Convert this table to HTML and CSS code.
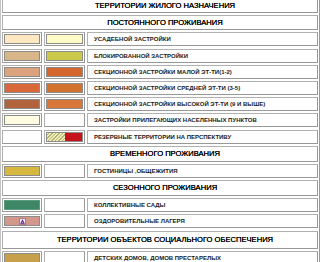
FILE: index.html
```html
<!DOCTYPE html>
<html lang="ru">
<head>
<meta charset="utf-8">
<link rel="stylesheet" href="styles.css">
</head>
<body>
<div class="legend">
  <div class="cell head h1">ТЕРРИТОРИИ ЖИЛОГО НАЗНАЧЕНИЯ</div>
  <div class="cell head h2">ПОСТОЯННОГО ПРОЖИВАНИЯ</div>

  <div class="cell sw"><div class="swatch c-usad1"></div></div>
  <div class="cell sw"><div class="swatch c-usad2"></div></div>
  <div class="cell txt">УСАДЕБНОЙ ЗАСТРОЙКИ</div>

  <div class="cell sw"><div class="swatch c-blok1"></div></div>
  <div class="cell sw"><div class="swatch c-blok2"></div></div>
  <div class="cell txt">БЛОКИРОВАННОЙ ЗАСТРОЙКИ</div>

  <div class="cell sw"><div class="swatch c-mal1"></div></div>
  <div class="cell sw"><div class="swatch c-mal2"></div></div>
  <div class="cell txt">СЕКЦИОННОЙ ЗАСТРОЙКИ МАЛОЙ ЭТ-ТИ(1-2)</div>

  <div class="cell sw"><div class="swatch c-sr1"></div></div>
  <div class="cell sw"><div class="swatch c-sr2"></div></div>
  <div class="cell txt">СЕКЦИОННОЙ ЗАСТРОЙКИ СРЕДНЕЙ ЭТ-ТИ (3-5)</div>

  <div class="cell sw"><div class="swatch c-vys1"></div></div>
  <div class="cell sw"><div class="swatch c-vys2"></div></div>
  <div class="cell txt">СЕКЦИОННОЙ ЗАСТРОЙКИ ВЫСОКОЙ ЭТ-ТИ (9 И ВЫШЕ)</div>

  <div class="cell sw"><div class="swatch c-pril"></div></div>
  <div class="cell sw"></div>
  <div class="cell txt">ЗАСТРОЙКИ ПРИЛЕГАЮЩИХ НАСЕЛЕННЫХ ПУНКТОВ</div>

  <div class="cell sw"></div>
  <div class="cell sw"><div class="swatch split"><span class="hatch"></span><span class="red"></span></div></div>
  <div class="cell txt">РЕЗЕРВНЫЕ ТЕРРИТОРИИ НА ПЕРСПЕКТИВУ</div>

  <div class="cell head h3">ВРЕМЕННОГО ПРОЖИВАНИЯ</div>

  <div class="cell sw"><div class="swatch c-gost"></div></div>
  <div class="cell sw"></div>
  <div class="cell txt">ГОСТИНИЦЫ ,ОБЩЕЖИТИЯ</div>

  <div class="cell head h3">СЕЗОННОГО ПРОЖИВАНИЯ</div>

  <div class="cell sw"><div class="swatch c-sad"></div></div>
  <div class="cell sw"></div>
  <div class="cell txt">КОЛЛЕКТИВНЫЕ САДЫ</div>

  <div class="cell sw"><div class="swatch c-lag"><span class="mark"><svg width="5" height="5" viewBox="0 0 5 5"><path d="M2.5 0.3 L4.8 4.7 L0.2 4.7 Z" fill="#5a1080"/><path d="M2.5 2.4 L3.3 4 L1.7 4 Z" fill="#e8d8f0"/></svg></span></div></div>
  <div class="cell sw"></div>
  <div class="cell txt">ОЗДОРОВИТЕЛЬНЫЕ ЛАГЕРЯ</div>

  <div class="cell head h4">ТЕРРИТОРИИ ОБЪЕКТОВ СОЦИАЛЬНОГО ОБЕСПЕЧЕНИЯ</div>

  <div class="cell sw"><div class="swatch c-det"></div></div>
  <div class="cell sw"></div>
  <div class="cell txt">ДЕТСКИХ ДОМОВ, ДОМОВ ПРЕСТАРЕЛЫХ</div>
</div>
</body>
</html>
```

FILE: styles.css
```css
html, body {
  margin: 0;
  padding: 0;
  background: #ffffff;
}

body {
  font-family: "Liberation Sans", Arial, sans-serif;
  color: #1e1e1e;
  overflow: hidden;
}

.legend {
  margin-top: -4px;
  border: 1px solid #c4c4c4;
  border-right-color: #9a9a9a;
  border-bottom-color: #9a9a9a;
  padding: 1px;
  display: grid;
  grid-template-columns: 40px 41px 1fr;
  column-gap: 2px;
  row-gap: 2.2px;
}

.cell {
  box-sizing: border-box;
  border: 1px solid #b0b0b0;
  border-right-color: #989898;
  border-bottom-color: #989898;
  background: #fff;
  height: 14px;
}

.head {
  grid-column: 1 / -1;
  text-align: center;
  font-size: 7.6px;
  padding-left: 10px;
  color: #000;
  text-shadow: 0 0 0.3px #000;
}

.h1 { height: 15px; line-height: 13px; }
.h2 { height: 15px; line-height: 13px; }
.h3 { height: 16px; line-height: 14px; }
.h4 { height: 18px; line-height: 16px; }

.txt {
  font-size: 6px;
  font-weight: bold;
  line-height: 12px;
  padding-left: 6px;
  white-space: nowrap;
  overflow: hidden;
  color: #1a1a1a;
}

.sw {
  padding: 1px;
}

.swatch {
  box-sizing: border-box;
  height: 10px;
  border: 1px solid #8c8c8c;
}

.c-usad1 { background: #fde8c2; }
.c-usad2 { background: #fefcc6; }
.c-blok1 { background: #d9b68a; }
.c-blok2 { background: #c9c94a; }
.c-mal1 { background: #dca27e; }
.c-mal2 { background: #d3672e; }
.c-sr1 { background: #d9693a; }
.c-sr2 { background: #d5712f; }
.c-vys1 { background: #b1643c; }
.c-vys2 { background: #d9773a; }
.c-pril { background: #fefde2; }
.c-gost { background: #d6b840; }
.c-det { background: #c6a04a; }

.c-sad {
  background-color: #3e8766;
  background-image: radial-gradient(circle, #6aa58a 0.5px, transparent 0.6px);
  background-size: 2px 2px;
  border-color: #5a9c7c;
}

.c-lag {
  background: #d4978b;
  display: flex;
  justify-content: center;
  align-items: center;
}

.mark {
  display: flex;
  align-items: center;
  justify-content: center;
  width: 7px;
  height: 7px;
  box-sizing: border-box;
  background: #f4eef4;
  border: 1px solid #a08090;
}

.split {
  display: flex;
}

.hatch {
  flex: 1;
  background: repeating-linear-gradient(-45deg, #eeeec0 0 1.5px, #b4b46c 1.5px 2.5px);
}

.red {
  flex: 1;
  background: #c6121c;
}
```
